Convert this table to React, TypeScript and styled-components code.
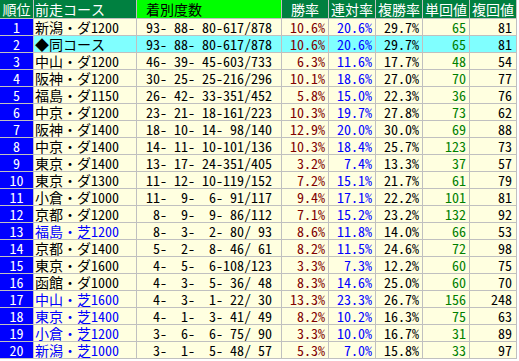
import React, { FunctionComponent } from "react";
import styled, { createGlobalStyle } from "styled-components";

type Row = {
  course: string;
  turf?: boolean;
  same?: boolean;
  rec: number[];
  win: string;
  ren: string;
  fuku: string;
  tan: number;
  fukuRet: number;
};

const rows: Row[] = [
  { course: "新潟・ダ1200", rec: [93, 88, 80, 617, 878], win: "10.6%", ren: "20.6%", fuku: "29.7%", tan: 65, fukuRet: 81 },
  { course: "◆同コース", same: true, rec: [93, 88, 80, 617, 878], win: "10.6%", ren: "20.6%", fuku: "29.7%", tan: 65, fukuRet: 81 },
  { course: "中山・ダ1200", rec: [46, 39, 45, 603, 733], win: "6.3%", ren: "11.6%", fuku: "17.7%", tan: 48, fukuRet: 54 },
  { course: "阪神・ダ1200", rec: [30, 25, 25, 216, 296], win: "10.1%", ren: "18.6%", fuku: "27.0%", tan: 70, fukuRet: 77 },
  { course: "福島・ダ1150", rec: [26, 42, 33, 351, 452], win: "5.8%", ren: "15.0%", fuku: "22.3%", tan: 36, fukuRet: 76 },
  { course: "中京・ダ1200", rec: [23, 21, 18, 161, 223], win: "10.3%", ren: "19.7%", fuku: "27.8%", tan: 73, fukuRet: 62 },
  { course: "阪神・ダ1400", rec: [18, 10, 14, 98, 140], win: "12.9%", ren: "20.0%", fuku: "30.0%", tan: 69, fukuRet: 88 },
  { course: "中京・ダ1400", rec: [14, 11, 10, 101, 136], win: "10.3%", ren: "18.4%", fuku: "25.7%", tan: 123, fukuRet: 73 },
  { course: "東京・ダ1400", rec: [13, 17, 24, 351, 405], win: "3.2%", ren: "7.4%", fuku: "13.3%", tan: 37, fukuRet: 57 },
  { course: "東京・ダ1300", rec: [11, 12, 10, 119, 152], win: "7.2%", ren: "15.1%", fuku: "21.7%", tan: 61, fukuRet: 79 },
  { course: "小倉・ダ1000", rec: [11, 9, 6, 91, 117], win: "9.4%", ren: "17.1%", fuku: "22.2%", tan: 101, fukuRet: 81 },
  { course: "京都・ダ1200", rec: [8, 9, 9, 86, 112], win: "7.1%", ren: "15.2%", fuku: "23.2%", tan: 132, fukuRet: 92 },
  { course: "福島・芝1200", turf: true, rec: [8, 3, 2, 80, 93], win: "8.6%", ren: "11.8%", fuku: "14.0%", tan: 66, fukuRet: 53 },
  { course: "京都・ダ1400", rec: [5, 2, 8, 46, 61], win: "8.2%", ren: "11.5%", fuku: "24.6%", tan: 72, fukuRet: 98 },
  { course: "東京・ダ1600", rec: [4, 5, 6, 108, 123], win: "3.3%", ren: "7.3%", fuku: "12.2%", tan: 60, fukuRet: 75 },
  { course: "函館・ダ1000", rec: [4, 3, 5, 36, 48], win: "8.3%", ren: "14.6%", fuku: "25.0%", tan: 60, fukuRet: 70 },
  { course: "中山・芝1600", turf: true, rec: [4, 3, 1, 22, 30], win: "13.3%", ren: "23.3%", fuku: "26.7%", tan: 156, fukuRet: 248 },
  { course: "東京・芝1400", turf: true, rec: [4, 1, 3, 41, 49], win: "8.2%", ren: "10.2%", fuku: "16.3%", tan: 75, fukuRet: 63 },
  { course: "小倉・芝1200", turf: true, rec: [3, 6, 6, 75, 90], win: "3.3%", ren: "10.0%", fuku: "16.7%", tan: 31, fukuRet: 89 },
  { course: "新潟・芝1000", turf: true, rec: [3, 1, 5, 48, 57], win: "5.3%", ren: "7.0%", fuku: "15.8%", tan: 33, fukuRet: 97 },
];

const pad = (n: number) => String(n).padStart(3, " ");
const formatRecord = (r: number[]) =>
  `${pad(r[0])}-${pad(r[1])}-${pad(r[2])}-${pad(r[3])}/${pad(r[4])}`;

const GlobalStyle = createGlobalStyle`
  html, body {
    margin: 0;
    padding: 0;
    background: #ffffff;
  }
  body {
    font-family: "Noto Sans Mono CJK JP", "Noto Sans CJK JP", "DejaVu Sans Mono", monospace;
  }
`;

const Table = styled.div`
  display: grid;
  grid-template-columns: 33px 102px 144px repeat(5, 46px);
  grid-template-rows: 18px repeat(20, 16px);
  gap: 1px;
  width: 517px;
  padding: 0 1px 1px 0;
  box-sizing: border-box;
  background: #c0c0c0;
  font-size: 14px;
  line-height: 1;
`;

const HeadCell = styled.div<{ $bright?: boolean; $align?: string; $indent?: number }>`
  display: flex;
  align-items: center;
  justify-content: ${(p) => p.$align || "center"};
  padding-left: ${(p) => p.$indent || 0}px;
  overflow: hidden;
  background: ${(p) => (p.$bright ? "#00ff00" : "#008040")};
  color: ${(p) => (p.$bright ? "#000000" : "#ffffff")};
  white-space: pre;
`;

const RankCell = styled.div`
  display: flex;
  align-items: center;
  justify-content: center;
  background: #0000ff;
  color: #ffffff;
`;

const Cell = styled.div<{ $same?: boolean; $color?: string; $right?: boolean; $padR?: number }>`
  display: flex;
  align-items: center;
  justify-content: ${(p) => (p.$right ? "flex-end" : "flex-start")};
  padding: 0 ${(p) => p.$padR ?? 0}px 0 ${(p) => (p.$right ? 0 : 1)}px;
  overflow: hidden;
  white-space: pre;
  background: ${(p) => (p.$same ? "#80ffff" : "#ffffe0")};
  color: ${(p) => p.$color || "#000000"};
`;

const RecordCell = styled(Cell)`
  padding-left: 2px;
`;

const App: FunctionComponent = () => {
  return (
    <>
      <GlobalStyle />
      <Table>
        <HeadCell>順位</HeadCell>
        <HeadCell $align="flex-start" $indent={1}>前走コース</HeadCell>
        <HeadCell $bright $align="flex-start" $indent={9}>着別度数</HeadCell>
        <HeadCell>勝率</HeadCell>
        <HeadCell>連対率</HeadCell>
        <HeadCell>複勝率</HeadCell>
        <HeadCell>単回値</HeadCell>
        <HeadCell>複回値</HeadCell>
        {rows.map((row, i) => (
          <React.Fragment key={i}>
            <RankCell>{i + 1}</RankCell>
            <Cell $same={row.same} $color={row.turf ? "#0000ff" : undefined}>
              {row.course}
            </Cell>
            <RecordCell $same={row.same}>{formatRecord(row.rec)}</RecordCell>
            <Cell $same={row.same} $right $padR={3} $color="#800000">{row.win}</Cell>
            <Cell $same={row.same} $right $padR={3} $color="#0000ff">{row.ren}</Cell>
            <Cell $same={row.same} $right $padR={3}>{row.fuku}</Cell>
            <Cell $same={row.same} $right $padR={3} $color="#008000">{row.tan}</Cell>
            <Cell $same={row.same} $right $padR={4}>{row.fukuRet}</Cell>
          </React.Fragment>
        ))}
      </Table>
    </>
  );
};

export default App;
